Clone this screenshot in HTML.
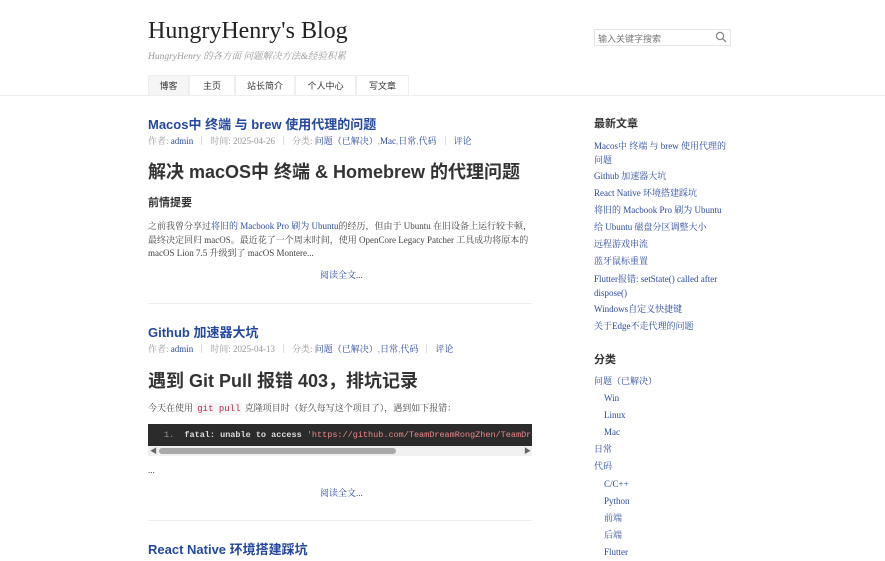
<!DOCTYPE html>
<html><head><meta charset="utf-8"><style>
*{margin:0;padding:0;box-sizing:border-box}
body{width:885px;height:561px;overflow:hidden;background:#fff;position:relative;font-family:"Liberation Serif","Noto Serif CJK SC","Noto Sans CJK SC",serif;color:#444}
.a{position:absolute;white-space:nowrap}
a{color:#2a4a9e;text-decoration:none}
.ttl{font-family:"Liberation Sans","Noto Sans CJK SC",sans-serif;font-weight:bold;font-size:13px;color:#2447a0}
.meta{font-size:9px;color:#999}
.meta a{color:#2a4a9e}
.meta i{display:inline-block;width:1px;height:9px;background:#ddd;margin:0 8px;vertical-align:-1px}
.h1{font-family:"Liberation Sans","Noto Sans CJK SC",sans-serif;font-weight:bold;font-size:18px;color:#333}
.p{font-size:9px;color:#444;line-height:13.5px}
.rm{font-size:9px;color:#2a4a9e;left:320px}
.sep{position:absolute;left:148px;width:384px;height:1px;background:#eee}
.side{font-size:9px;color:#2a4a9e;line-height:12px}
.sh{font-family:"Liberation Sans","Noto Sans CJK SC",sans-serif;font-weight:bold;font-size:11px;color:#333}
.nav{position:absolute;top:75px;height:21px;border:1px solid #eee;border-bottom:none;font-size:9px;color:#333;text-align:center;line-height:20px;font-family:"Liberation Sans","Noto Sans CJK SC",sans-serif}
</style></head><body>
<div class="a" style="left:148px;top:18px;font-size:24px;color:#222">HungryHenry's Blog</div>
<div class="a" style="left:148px;top:48px;font-size:9.5px;font-style:italic;color:#999">HungryHenry 的各方面 问题解决方法&amp;经验积累</div>
<div style="position:absolute;left:594px;top:29px;width:137px;height:17px;border:1px solid #e5e5e5;background:#fff"></div>
<div class="a" style="left:598px;top:32px;font-size:9px;color:#777;font-family:'Liberation Sans','Noto Sans CJK SC',sans-serif">输入关键字搜索</div>
<svg class="a" style="left:715px;top:31px" width="12" height="12" viewBox="0 0 12 12"><circle cx="5" cy="5" r="3.6" fill="none" stroke="#888" stroke-width="1.2"/><line x1="7.6" y1="7.6" x2="11" y2="11" stroke="#888" stroke-width="1.3"/></svg>
<div class="nav" style="left:148px;width:41px;background:#f5f5f5">博客</div>
<div class="nav" style="left:189px;width:46px">主页</div>
<div class="nav" style="left:235px;width:60px">站长简介</div>
<div class="nav" style="left:295px;width:61px">个人中心</div>
<div class="nav" style="left:356px;width:53px">写文章</div>
<div style="position:absolute;left:0;top:95px;width:885px;height:1px;background:#eee"></div>

<div class="a ttl" style="left:148px;top:114px">Macos中 终端 与 brew 使用代理的问题</div>
<div class="a meta" style="left:148px;top:134px">作者: <a>admin</a><i></i>时间: 2025-04-26<i></i>分类: <a>问题（已解决）</a>,<a>Mac</a>,<a>日常</a>,<a>代码</a><i></i><a>评论</a></div>
<div class="a h1" style="left:148px;top:158px">解决 macOS中 终端 &amp; Homebrew 的代理问题</div>
<div class="a" style="left:148px;top:194px;font-size:11px;font-weight:bold;color:#333;font-family:'Liberation Sans','Noto Sans CJK SC',sans-serif">前情提要</div>
<div class="a p" style="left:148px;top:220px">之前我曾分享过<a>将旧的 Macbook Pro 刷为 Ubuntu</a>的经历，但由于 Ubuntu 在旧设备上运行较卡顿，<br>最终决定回归 macOS。最近花了一个周末时间，使用 OpenCore Legacy Patcher 工具成功将原本的<br>macOS Lion 7.5 升级到了 macOS Montere...</div>
<div class="a rm" style="top:268px">阅读全文...</div>
<div class="sep" style="top:303px"></div>

<div class="a ttl" style="left:148px;top:322px">Github 加速器大坑</div>
<div class="a meta" style="left:148px;top:342px">作者: <a>admin</a><i></i>时间: 2025-04-13<i></i>分类: <a>问题（已解决）</a>,<a>日常</a>,<a>代码</a><i></i><a>评论</a></div>
<div class="a h1" style="left:148px;top:367px">遇到 Git Pull 报错 403，排坑记录</div>
<div class="a p" style="left:148px;top:402px">今天在使用 <span style="font-family:'Liberation Mono',monospace;color:#c7254e;background:#f6f6f6;padding:1px 2px">git pull</span> 克隆项目时（好久每写这个项目了），遇到如下报错：</div>
<div style="position:absolute;left:148px;top:424px;width:384px;height:22px;background:#2b2b2b;overflow:hidden">
<div class="a" style="left:16px;top:6px;font-family:'Liberation Mono',monospace;font-size:8.5px;font-weight:bold;color:#ddd"><span style="color:#999;font-weight:normal">1.</span>&nbsp; fatal: unable to access <span style="color:#e88;font-weight:normal">'https://github.com/TeamDreamRongZhen/TeamDreamRongZhen.github.io</span></div></div>
<div style="position:absolute;left:148px;top:446px;width:384px;height:10px;background:#f0f0f0"></div>
<div style="position:absolute;left:159px;top:448px;width:237px;height:6px;border-radius:3px;background:#a8a8a8"></div>
<div class="a" style="left:150px;top:446px;font-size:7px;color:#666">◀</div>
<div class="a" style="left:524px;top:446px;font-size:7px;color:#666">▶</div>
<div class="a p" style="left:148px;top:464px">...</div>
<div class="a rm" style="top:486px">阅读全文...</div>
<div class="sep" style="top:520px"></div>
<div class="a ttl" style="left:148px;top:539px">React Native 环境搭建踩坑</div>

<div class="a sh" style="left:594px;top:115px">最新文章</div>
<div class="a side" style="left:594px;top:139px;line-height:14px">Macos中 终端 与 brew 使用代理的<br>问题</div>
<div class="a side" style="left:594px;top:170px">Github 加速器大坑</div>
<div class="a side" style="left:594px;top:187px">React Native 环境搭建踩坑</div>
<div class="a side" style="left:594px;top:204px">将旧的 Macbook Pro 刷为 Ubuntu</div>
<div class="a side" style="left:594px;top:221px">给 Ubuntu 磁盘分区调整大小</div>
<div class="a side" style="left:594px;top:238px">远程游戏串流</div>
<div class="a side" style="left:594px;top:255px">蓝牙鼠标重置</div>
<div class="a side" style="left:594px;top:272px;line-height:14px">Flutter报错: setState() called after<br>dispose()</div>
<div class="a side" style="left:594px;top:303px">Windows自定义快捷键</div>
<div class="a side" style="left:594px;top:320px">关于Edge不走代理的问题</div>

<div class="a sh" style="left:594px;top:351px">分类</div>
<div class="a side" style="left:594px;top:375px">问题（已解决）</div>
<div class="a side" style="left:604px;top:392px">Win</div>
<div class="a side" style="left:604px;top:409px">Linux</div>
<div class="a side" style="left:604px;top:426px">Mac</div>
<div class="a side" style="left:594px;top:443px">日常</div>
<div class="a side" style="left:594px;top:460px">代码</div>
<div class="a side" style="left:604px;top:478px">C/C++</div>
<div class="a side" style="left:604px;top:495px">Python</div>
<div class="a side" style="left:604px;top:512px">前端</div>
<div class="a side" style="left:604px;top:529px">后端</div>
<div class="a side" style="left:604px;top:546px">Flutter</div>
</body></html>
